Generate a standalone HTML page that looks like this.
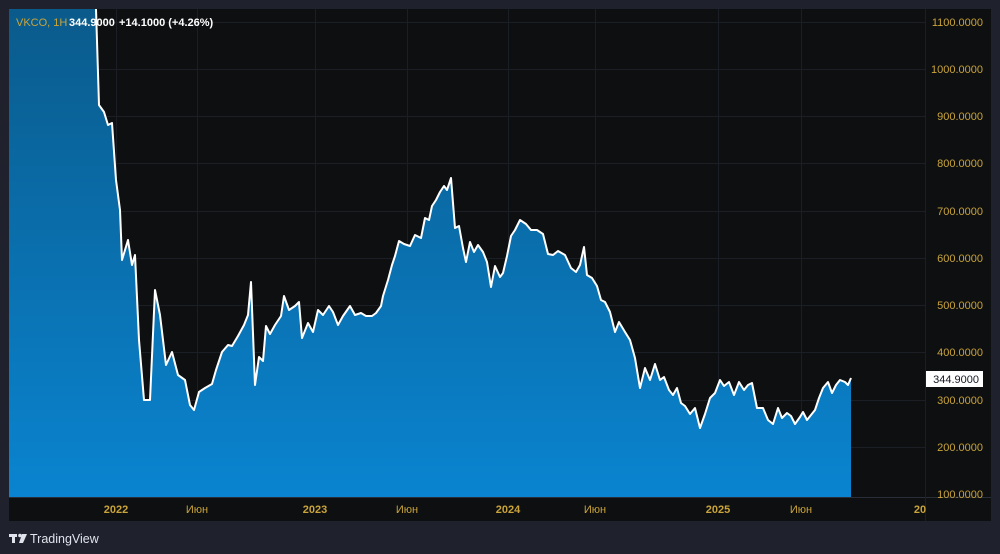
<!DOCTYPE html><html><head><meta charset="utf-8"><style>
body{margin:0;width:1000px;height:554px;background:#1f222d;overflow:hidden;font-family:"Liberation Sans",sans-serif;}
</style></head><body>
<svg width="1000" height="554" style="position:absolute;left:0;top:0">
<defs><linearGradient id="g" x1="0" y1="0" x2="0" y2="1"><stop offset="0" stop-color="#0a5a8a"/><stop offset="1" stop-color="#0a84d0"/></linearGradient>
<clipPath id="c"><rect x="9" y="9" width="916" height="488"/></clipPath></defs>
<rect x="9" y="9" width="982" height="512" fill="#0e0f11"/>
<g stroke="#1b1e24" stroke-width="1">
<line x1="9" y1="22.5" x2="925" y2="22.5"/><line x1="9" y1="69.5" x2="925" y2="69.5"/><line x1="9" y1="116.5" x2="925" y2="116.5"/><line x1="9" y1="163.5" x2="925" y2="163.5"/><line x1="9" y1="211.5" x2="925" y2="211.5"/><line x1="9" y1="258.5" x2="925" y2="258.5"/><line x1="9" y1="305.5" x2="925" y2="305.5"/><line x1="9" y1="352.5" x2="925" y2="352.5"/><line x1="9" y1="400.5" x2="925" y2="400.5"/><line x1="9" y1="447.5" x2="925" y2="447.5"/>
<line x1="116.5" y1="9" x2="116.5" y2="497"/><line x1="197.5" y1="9" x2="197.5" y2="497"/><line x1="315.5" y1="9" x2="315.5" y2="497"/><line x1="407.5" y1="9" x2="407.5" y2="497"/><line x1="508.5" y1="9" x2="508.5" y2="497"/><line x1="595.5" y1="9" x2="595.5" y2="497"/><line x1="718.5" y1="9" x2="718.5" y2="497"/><line x1="801.5" y1="9" x2="801.5" y2="497"/>
</g>
<g clip-path="url(#c)">
<path id="p" d="M9,0 L95,0 L96,9 L99,105 L104,112 L108,125 L112,123 L116,180 L120,210 L122,260 L128,240 L132,265 L135,255 L139,340 L144,400 L150,400 L155,290 L160,315 L166,365 L172,352 L178,375 L185,380 L190,405 L194,410 L199,392 L205,388 L212,384 L216,370 L222,352 L228,345 L232,346 L238,336 L244,325 L248,315 L251,282 L255,385 L259,357 L263,361 L266,326 L270,334 L275,325 L281,316 L284,296 L289,310 L295,306 L299,302 L302,338 L308,323 L313,332 L318,310 L323,315 L329,306 L333,312 L338,325 L343,316 L350,306 L355,315 L361,313 L366,316 L372,316 L376,313 L381,306 L383,296 L388,280 L392,265 L395,256 L399,241 L404,244 L410,246 L415,235 L421,238 L425,218 L429,220 L432,206 L436,200 L440,192 L444,186 L447,190 L451,178 L455,228 L459,226 L463,248 L466,262 L470,242 L474,252 L478,245 L483,252 L487,262 L491,287 L495,266 L500,277 L503,273 L507,256 L511,236 L515,230 L520,220 L526,224 L531,230 L537,230 L543,234 L548,254 L553,255 L558,251 L565,255 L571,268 L576,272 L580,265 L584,247 L587,275 L592,278 L597,286 L601,300 L605,302 L610,312 L615,332 L619,322 L625,332 L630,340 L635,358 L640,388 L645,368 L650,380 L655,364 L660,380 L664,377 L669,390 L673,395 L677,388 L681,403 L685,406 L690,414 L695,408 L700,428 L705,414 L710,398 L715,393 L720,380 L724,386 L729,382 L734,395 L739,382 L744,390 L748,385 L752,383 L757,408 L763,408 L768,420 L773,424 L778,408 L782,418 L787,413 L791,416 L795,424 L800,417 L803,412 L807,420 L811,415 L815,410 L819,398 L823,388 L828,382 L832,393 L836,385 L840,380 L845,382 L848,385 L851,378 L851,497 L9,497 Z" fill="url(#g)"/>
<path d="M95,0 L96,9 L99,105 L104,112 L108,125 L112,123 L116,180 L120,210 L122,260 L128,240 L132,265 L135,255 L139,340 L144,400 L150,400 L155,290 L160,315 L166,365 L172,352 L178,375 L185,380 L190,405 L194,410 L199,392 L205,388 L212,384 L216,370 L222,352 L228,345 L232,346 L238,336 L244,325 L248,315 L251,282 L255,385 L259,357 L263,361 L266,326 L270,334 L275,325 L281,316 L284,296 L289,310 L295,306 L299,302 L302,338 L308,323 L313,332 L318,310 L323,315 L329,306 L333,312 L338,325 L343,316 L350,306 L355,315 L361,313 L366,316 L372,316 L376,313 L381,306 L383,296 L388,280 L392,265 L395,256 L399,241 L404,244 L410,246 L415,235 L421,238 L425,218 L429,220 L432,206 L436,200 L440,192 L444,186 L447,190 L451,178 L455,228 L459,226 L463,248 L466,262 L470,242 L474,252 L478,245 L483,252 L487,262 L491,287 L495,266 L500,277 L503,273 L507,256 L511,236 L515,230 L520,220 L526,224 L531,230 L537,230 L543,234 L548,254 L553,255 L558,251 L565,255 L571,268 L576,272 L580,265 L584,247 L587,275 L592,278 L597,286 L601,300 L605,302 L610,312 L615,332 L619,322 L625,332 L630,340 L635,358 L640,388 L645,368 L650,380 L655,364 L660,380 L664,377 L669,390 L673,395 L677,388 L681,403 L685,406 L690,414 L695,408 L700,428 L705,414 L710,398 L715,393 L720,380 L724,386 L729,382 L734,395 L739,382 L744,390 L748,385 L752,383 L757,408 L763,408 L768,420 L773,424 L778,408 L782,418 L787,413 L791,416 L795,424 L800,417 L803,412 L807,420 L811,415 L815,410 L819,398 L823,388 L828,382 L832,393 L836,385 L840,380 L845,382 L848,385 L851,378" fill="none" stroke="#fff" stroke-width="2" stroke-linejoin="round"/>
</g>
<line x1="9" y1="497.5" x2="991" y2="497.5" stroke="#2a2e39"/>
<line x1="925.5" y1="9" x2="925.5" y2="521" stroke="#1b1e24"/>
<g fill="#c9a43a" font-size="11" text-anchor="end">
<text x="983" y="26">1100.0000</text><text x="983" y="73">1000.0000</text><text x="983" y="120">900.0000</text><text x="983" y="167">800.0000</text><text x="983" y="215">700.0000</text><text x="983" y="262">600.0000</text><text x="983" y="309">500.0000</text><text x="983" y="356">400.0000</text><text x="983" y="404">300.0000</text><text x="983" y="451">200.0000</text><text x="983" y="498">100.0000</text>
</g>
<rect x="926" y="371" width="57" height="16" fill="#fff"/>
<text x="979" y="383" fill="#131722" font-size="11" text-anchor="end">344.9000</text>
<g fill="#c9a43a" font-size="11" text-anchor="middle">
<text x="116" y="513" font-weight="bold">2022</text><text x="197" y="513">Июн</text><text x="315" y="513" font-weight="bold">2023</text><text x="407" y="513">Июн</text><text x="508" y="513" font-weight="bold">2024</text><text x="595" y="513">Июн</text><text x="718" y="513" font-weight="bold">2025</text><text x="801" y="513">Июн</text><text x="920" y="513" font-weight="bold">20</text>
</g>
<text x="16" y="26" font-size="11" fill="#c9a43a">VKCO, 1H</text>
<text x="69" y="26" font-size="11" fill="#fff" font-weight="bold">344.9000</text>
<text x="119" y="26" font-size="11" fill="#fff" font-weight="bold">+14.1000 (+4.26%)</text>
<g fill="#e0e3eb"><rect x="9" y="534" width="8" height="3"/><rect x="12" y="534" width="3" height="9"/><circle cx="20" cy="535.5" r="1.8"/><path d="M22,534 H27 L23,543 H19 Z"/></g>
<text x="30" y="543" font-size="12.5" fill="#e0e3eb">TradingView</text>
</svg>
</body></html>
